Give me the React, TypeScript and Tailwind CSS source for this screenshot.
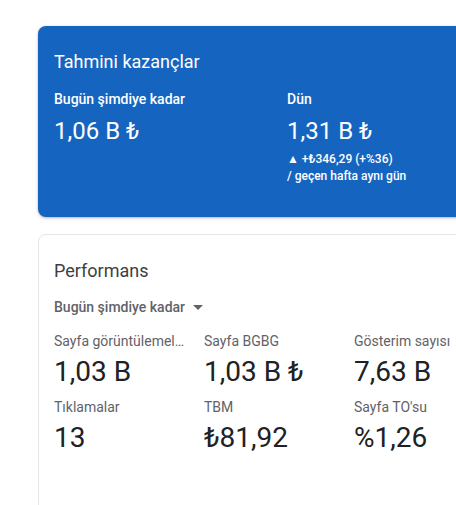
import React from "react";

const font = { fontFamily: "Roboto, 'Noto Sans', Arial, sans-serif" };

function Metric({ label, value }: { label: string; value: string }) {
  return (
    <div className="w-[150px] pr-4 min-w-0">
      <div className="text-[14px] leading-[20px] text-[#5f6368] truncate">{label}</div>
      <div className="mt-[3px] text-[28px] leading-[36px] text-[#202124]">{value}</div>
    </div>
  );
}

export default function App() {
  return (
    <div className="w-[456px] h-[505px] overflow-hidden bg-white" style={font}>
      <div className="pl-[38px] pt-[26px] w-[520px]">
        <div className="h-[191px] rounded-lg bg-[#1565c0] shadow-[0_1px_3px_rgba(0,0,0,0.3)] pl-4 pt-6 text-white">
          <div className="text-[18px] leading-[24px]">Tahmini kazançlar</div>
          <div className="flex mt-[15px]">
            <div className="w-[234px]">
              <div className="text-[14px] leading-[20px] font-medium">Bugün şimdiye kadar</div>
              <div className="mt-[6px] text-[24px] leading-[32px]">1,06 B ₺</div>
            </div>
            <div className="w-[234px]">
              <div className="text-[14px] leading-[20px] font-medium">Dün</div>
              <div className="mt-[6px] text-[24px] leading-[32px]">1,31 B ₺</div>
              <div className="mt-[4px] text-[12px] leading-[16px] font-medium">▲ +₺346,29 (+%36)</div>
              <div className="mt-[1px] text-[12px] leading-[16px] font-medium">/ geçen hafta aynı gün</div>
            </div>
          </div>
        </div>
        <div className="mt-[17px] h-[300px] rounded-lg border border-[#e3e5e8] bg-white pl-[15px] pt-6">
          <div className="text-[18px] leading-[24px] text-[#3c4043]">Performans</div>
          <div className="mt-[14px] flex items-center text-[14px] leading-[20px] font-medium text-[#5f6368]">
            <span>Bugün şimdiye kadar</span>
            <svg width="10" height="5" viewBox="0 0 10 5" className="ml-[8px]">
              <path d="M0 0 L10 0 L5 5 Z" fill="#5f6368" />
            </svg>
          </div>
          <div className="mt-[14px] flex">
            <Metric label="Sayfa görüntülemeleri" value="1,03 B" />
            <Metric label="Sayfa BGBG" value="1,03 B ₺" />
            <Metric label="Gösterim sayısı" value="7,63 B" />
          </div>
          <div className="mt-[7px] flex">
            <Metric label="Tıklamalar" value="13" />
            <Metric label="TBM" value="₺81,92" />
            <Metric label="Sayfa TO'su" value="%1,26" />
          </div>
        </div>
      </div>
    </div>
  );
}
